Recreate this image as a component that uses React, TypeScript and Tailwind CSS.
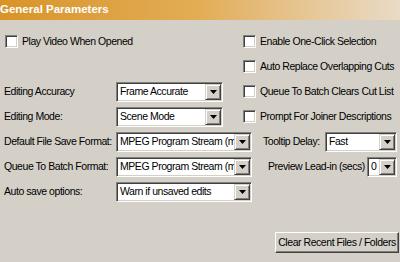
import React from "react";

function Checkbox({ label }: { label: string }) {
  return (
    <div className="flex items-center gap-[4px]">
      <span className="box-border h-[13px] w-[13px] shrink-0 border border-t-[#808080] border-l-[#808080] border-b-white border-r-white bg-white shadow-[inset_1px_1px_0_#404040,inset_-1px_-1px_0_#d4d0c8]" />
      <span className="whitespace-nowrap">{label}</span>
    </div>
  );
}

function Select({ value, width }: { value: string; width: string }) {
  return (
    <div
      className={`box-border flex h-[20px] shrink-0 items-stretch border border-t-[#808080] border-l-[#808080] border-b-white border-r-white bg-white p-[1px] shadow-[inset_1px_1px_0_#404040,inset_-1px_-1px_0_#d4d0c8] ${width}`}
    >
      <div className="flex min-w-0 flex-1 items-center overflow-hidden whitespace-nowrap pl-[2px]">
        {value}
      </div>
      <div className="box-border flex w-[16px] shrink-0 items-center justify-center border border-t-[#d4d0c8] border-l-[#d4d0c8] border-b-[#404040] border-r-[#404040] bg-[#d4d0c8] shadow-[inset_1px_1px_0_white,inset_-1px_-1px_0_#808080]">
        <svg width="7" height="4" viewBox="0 0 7 4">
          <path d="M0 0h7L3.5 4z" fill="black" />
        </svg>
      </div>
    </div>
  );
}

function Row({ children }: { children: React.ReactNode }) {
  return <div className="flex h-[25px] items-center">{children}</div>;
}

export default function App() {
  return (
    <div
      className="h-[262px] w-[400px] overflow-hidden bg-[#d4d0c8] text-[10.5px] tracking-[-0.45px] text-black"
      style={{ fontFamily: '"Liberation Sans", Arial, sans-serif' }}
    >
      <div className="flex h-[20px] items-center bg-gradient-to-r from-[#d99426] via-[#e2ad55] to-[#e9dbc6] text-[11.5px] font-bold tracking-[0px] text-white">
        General Parameters
      </div>

      <div className="flex flex-col pt-[9px]">
        <Row>
          <div className="w-[243px] pl-[5px]">
            <Checkbox label="Play Video When Opened" />
          </div>
          <Checkbox label="Enable One-Click Selection" />
        </Row>
        <Row>
          <div className="w-[243px]" />
          <Checkbox label="Auto Replace Overlapping Cuts" />
        </Row>
        <Row>
          <div className="flex w-[243px] items-center pl-[4px]">
            <span className="w-[112px]">Editing Accuracy</span>
            <Select value="Frame Accurate" width="w-[107px]" />
          </div>
          <Checkbox label="Queue To Batch Clears Cut List" />
        </Row>
        <Row>
          <div className="flex w-[243px] items-center pl-[4px]">
            <span className="w-[112px]">Editing Mode:</span>
            <Select value="Scene Mode" width="w-[107px]" />
          </div>
          <Checkbox label="Prompt For Joiner Descriptions" />
        </Row>
        <Row>
          <div className="flex w-[263px] items-center pl-[4px]">
            <span className="w-[112px] whitespace-nowrap">Default File Save Format:</span>
            <Select value="MPEG Program Stream (mpg)" width="w-[136px]" />
          </div>
          <span className="w-[62px] whitespace-nowrap">Tooltip Delay:</span>
          <Select value="Fast" width="w-[72px]" />
        </Row>
        <Row>
          <div className="flex w-[268px] items-center pl-[4px]">
            <span className="w-[112px] whitespace-nowrap">Queue To Batch Format:</span>
            <Select value="MPEG Program Stream (mpg)" width="w-[136px]" />
          </div>
          <span className="w-[99px] whitespace-nowrap">Preview Lead-in (secs)</span>
          <Select value="0" width="w-[30px]" />
        </Row>
        <Row>
          <div className="flex w-[268px] items-center pl-[4px]">
            <span className="w-[112px] whitespace-nowrap">Auto save options:</span>
            <Select value="Warn if unsaved edits" width="w-[136px]" />
          </div>
        </Row>
      </div>

      <div className="flex justify-end pr-[1px] pt-[28px]">
        <button
          type="button"
          className="box-border h-[21px] w-[124px] whitespace-nowrap border border-t-white border-l-white border-b-[#404040] border-r-[#404040] bg-[#d4d0c8] text-[10.5px] tracking-[-0.45px] shadow-[inset_-1px_-1px_0_#808080]"
        >
          Clear Recent Files / Folders
        </button>
      </div>
    </div>
  );
}
